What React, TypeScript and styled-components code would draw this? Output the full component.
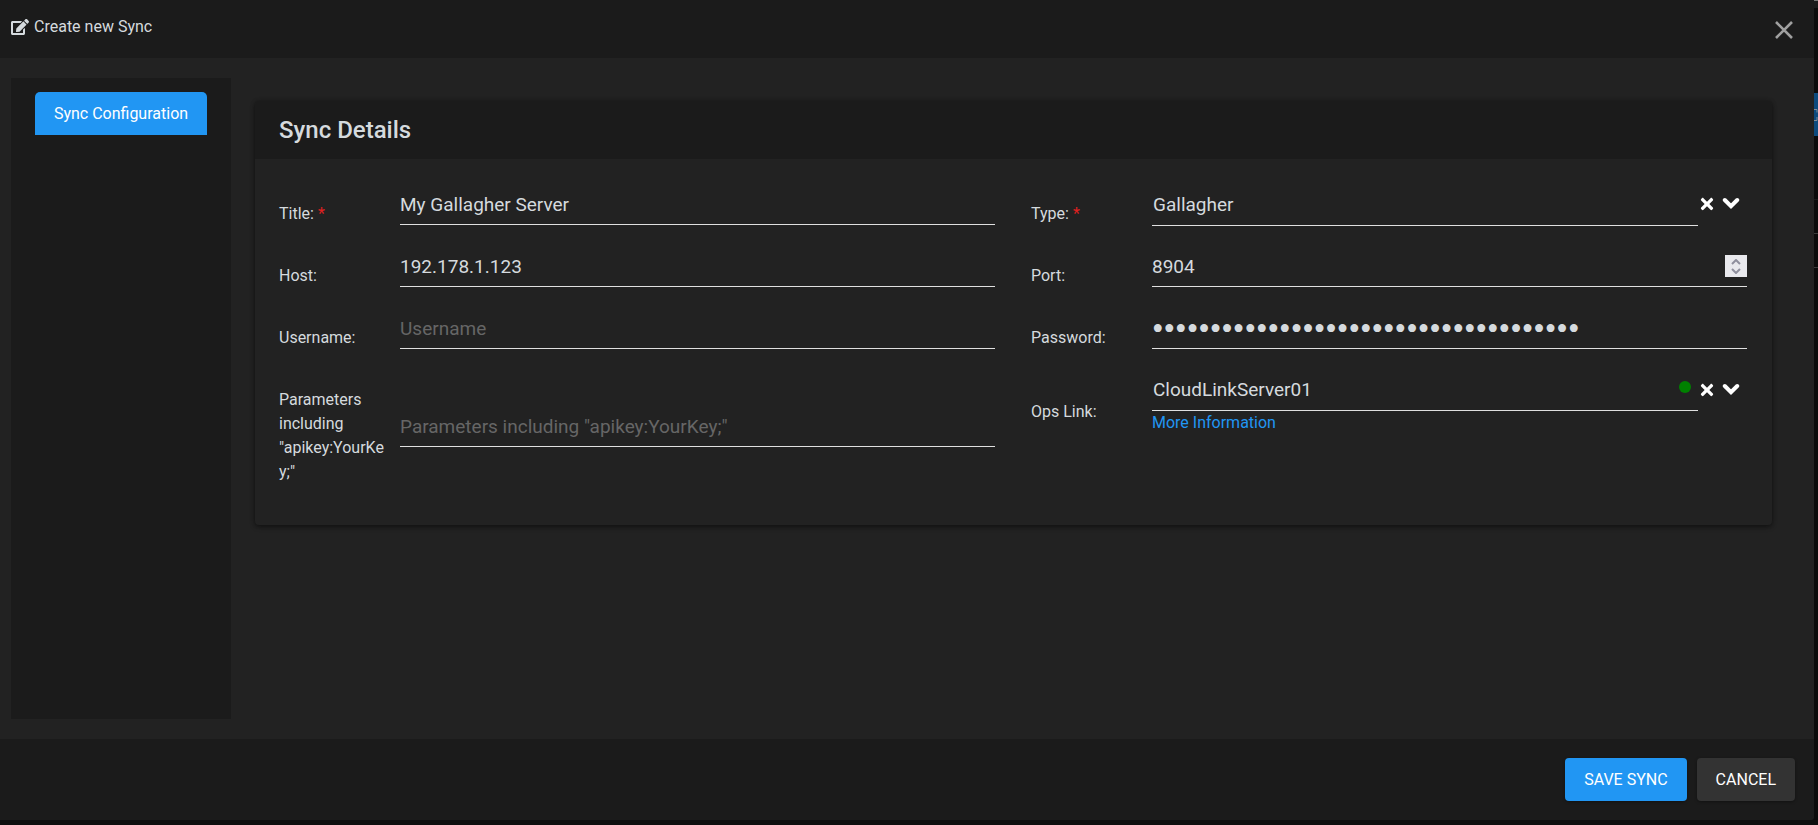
import React, { useState } from "react";
import styled, { createGlobalStyle } from "styled-components";
import { FaEdit, FaTimes } from "react-icons/fa";

const color = {
  panel: "#1b1b1b",
  surface: "#222222",
  text: "#d5dade",
  line: "#e0e0e0",
  accent: "#2196f3",
};

const GlobalStyle = createGlobalStyle`
  *, *::before, *::after { box-sizing: border-box; }
  body {
    margin: 0;
    background: #0e0e0e;
    color: ${color.text};
    font: 400 16px/24px Roboto, sans-serif;
  }
  button, input, select { font: inherit; color: inherit; }
`;

const Page = styled.div`
  display: grid;
  grid-template-columns: minmax(0, 1fr) 4px;
  min-height: 100vh;
  padding-bottom: 5px;
`;

const Dialog = styled.section`
  display: flex;
  flex-direction: column;
  background: ${color.surface};
  border-radius: 0 0 4px 0;
  overflow: hidden;
`;

const Header = styled.header`
  display: flex;
  align-items: flex-start;
  justify-content: space-between;
  height: 58px;
  padding: 15px 20px 0 11px;
  background: ${color.panel};
`;

const Heading = styled.h1`
  display: flex;
  align-items: center;
  gap: 5px;
  margin: 0;
  font-size: 16px;
  font-weight: 400;
  line-height: 24px;
`;

const IconButton = styled.button`
  display: flex;
  align-items: center;
  justify-content: center;
  padding: 0;
  border: 0;
  background: none;
  color: #ffffff;
  cursor: pointer;
`;

const CloseButton = styled(IconButton)`
  padding-top: 5px;
  color: #a0a0a0;
`;

const Body = styled.div`
  display: grid;
  grid-template-columns: 220px minmax(0, 1fr);
  gap: 24px;
  flex: 1;
  padding: 20px 42px 20px 11px;
`;

const Sidebar = styled.nav`
  padding: 14px 24px;
  background: ${color.panel};
`;

const Tab = styled.button`
  width: 100%;
  height: 43px;
  padding: 0;
  border: 0;
  border-radius: 5px 5px 0 0;
  background: ${color.accent};
  color: #ffffff;
`;

const Card = styled.section`
  align-self: start;
  margin-top: 23px;
  border-radius: 4px;
  box-shadow: 0 2px 5px rgba(0, 0, 0, 0.4), 0 0 4px rgba(0, 0, 0, 0.25);
`;

const CardTitle = styled.h2`
  margin: 0;
  padding: 14px 24px;
  border-radius: 4px 4px 0 0;
  background: ${color.panel};
  font-size: 24px;
  font-weight: 500;
  line-height: 30px;
`;

const Form = styled.form`
  display: grid;
  grid-template-columns: repeat(2, minmax(0, 1fr));
  column-gap: 36px;
  padding: 23px 25px 41px 24px;
`;

const Column = styled.div`
  display: flex;
  flex-direction: column;
  gap: 18px;
`;

const Row = styled.div`
  display: grid;
  grid-template-columns: 107px minmax(0, 1fr);
  column-gap: 14px;
  align-items: center;
`;

const Label = styled.label`
  padding-top: 20px;
  overflow-wrap: anywhere;
`;

const Required = styled.span`
  color: #e02020;
`;

const Control = styled.div`
  position: relative;
  display: flex;
  align-items: center;
`;

const Input = styled.input`
  width: 100%;
  height: 42px;
  padding: 2px 0 0;
  border: 0;
  border-bottom: 1px solid ${color.line};
  border-radius: 0;
  outline: 0;
  background: transparent;
  font-size: 19px;
  appearance: textfield;

  &::placeholder { color: #666666; opacity: 1; }
  &::-webkit-inner-spin-button { appearance: none; margin: 0; }
  &[type="password"] {
    padding-top: 4px;
    font-family: "Liberation Serif", serif;
    font-size: 33px;
  }
`;

const Select = styled.select`
  flex: 1;
  min-width: 0;
  height: 43px;
  padding: 2px 1px 0;
  border: 0;
  border-bottom: 1px solid ${color.line};
  border-radius: 0;
  outline: 0;
  background: transparent;
  font-size: 19px;
  appearance: none;
`;

const SelectActions = styled.div`
  display: flex;
  align-items: center;
  gap: 6px;
  width: 49px;
`;

const StatusDot = styled.span`
  position: absolute;
  top: 13px;
  right: 56px;
  width: 12px;
  height: 12px;
  border-radius: 50%;
  background: #008000;
`;

const Spinner = styled.div`
  position: absolute;
  top: 10px;
  right: 0;
  display: grid;
  width: 22px;
  height: 22px;
  padding: 2px 0;
  background: #e9e9ed;
`;

const SpinButton = styled(IconButton)`
  color: #8f8f9d;
`;

const InfoLink = styled.a`
  display: block;
  color: ${color.accent};
  text-decoration: none;
`;

const Footer = styled.footer`
  display: flex;
  justify-content: flex-end;
  gap: 10px;
  padding: 19px;
  background: ${color.panel};
`;

const Action = styled.button<{ $primary?: boolean }>`
  height: 43px;
  padding: 0 19px;
  border: 0;
  border-radius: 4px;
  background: ${(p) => (p.$primary ? color.accent : "#333333")};
  color: #ffffff;
  box-shadow: 0 1px 3px rgba(0, 0, 0, 0.35);
`;

const Backdrop = styled.div`
  display: flex;
  flex-direction: column;
  overflow: hidden;
  background: #0b0b0b;
`;

const BackdropBar = styled.div`
  height: 8px;
  border-top: 1px solid #777777;
  background: ${color.panel};
`;

const BackdropTab = styled.div`
  display: flex;
  align-items: center;
  height: 43px;
  margin-top: 85px;
  background: #0d4a7d;
`;

const BackdropRow = styled.div<{ $tall?: boolean }>`
  height: ${(p) => (p.$tall ? "64px" : "34px")};
  border-bottom: 1px solid ${(p) => (p.$tall ? "#1a1a1a" : "#3a3a3a")};
`;

function SelectField({ id, value, name, online }: { id: string; value: string; name: string; online?: boolean }) {
  return (
    <Control>
      <Select id={id} defaultValue={value}>
        <option>{value}</option>
      </Select>
      {online && <StatusDot />}
      <SelectActions>
        <IconButton type="button" aria-label={`Clear ${name}`}>
          <FaTimes size={18} />
        </IconButton>
        <IconButton type="button" aria-label={`Open ${name}`}>
          <svg width="18" height="14" fill="none" stroke="currentColor" strokeWidth="4" strokeLinecap="round">
            <path d="M2.800 3l6.200 6.200L15.200 3" />
          </svg>
        </IconButton>
      </SelectActions>
    </Control>
  );
}

function PortField() {
  const [port, setPort] = useState(8904);
  return (
    <Control>
      <Input id="port" type="number" value={port} onChange={(e) => setPort(Number(e.target.value))} />
      <Spinner>
        <SpinButton type="button" aria-label="Increase port" onClick={() => setPort(port + 1)}>
          <svg width="10" height="6" fill="none" stroke="currentColor" strokeWidth="2">
            <path d="M1 5l4-4 4 4" />
          </svg>
        </SpinButton>
        <SpinButton type="button" aria-label="Decrease port" onClick={() => setPort(port - 1)}>
          <svg width="10" height="6" fill="none" stroke="currentColor" strokeWidth="2">
            <path d="M1 1l4 4 4-4" />
          </svg>
        </SpinButton>
      </Spinner>
    </Control>
  );
}

export default function App() {
  return (
    <Page>
      <GlobalStyle />
      <Dialog>
        <Header>
          <Heading>
            <FaEdit size={18} />
            Create new Sync
          </Heading>
          <CloseButton type="button" aria-label="Close">
            <svg width="20" height="20" fill="none" stroke="currentColor" strokeWidth="2.6">
              <path d="M2 2l16 16M18 2L2 18" />
            </svg>
          </CloseButton>
        </Header>
        <Body>
          <Sidebar>
            <Tab type="button">Sync Configuration</Tab>
          </Sidebar>
          <Card>
            <CardTitle>Sync Details</CardTitle>
            <Form>
              <Column>
                <Row>
                  <Label htmlFor="title">
                    Title: <Required>*</Required>
                  </Label>
                  <Input id="title" defaultValue="My Gallagher Server" />
                </Row>
                <Row>
                  <Label htmlFor="host">Host:</Label>
                  <Input id="host" defaultValue="192.178.1.123" />
                </Row>
                <Row>
                  <Label htmlFor="username">Username:</Label>
                  <Input id="username" placeholder="Username" />
                </Row>
                <Row>
                  <Label htmlFor="parameters">Parameters including "apikey:YourKey;"</Label>
                  <Input id="parameters" placeholder={'Parameters including "apikey:YourKey;"'} />
                </Row>
              </Column>
              <Column>
                <Row>
                  <Label htmlFor="type">
                    Type: <Required>*</Required>
                  </Label>
                  <SelectField id="type" name="type" value="Gallagher" />
                </Row>
                <Row>
                  <Label htmlFor="port">Port:</Label>
                  <PortField />
                </Row>
                <Row>
                  <Label htmlFor="password">Password:</Label>
                  <Input id="password" type="password" defaultValue={"x".repeat(37)} />
                </Row>
                <Row>
                  <Label htmlFor="ops-link">Ops Link:</Label>
                  <div>
                    <SelectField id="ops-link" name="ops link" value="CloudLinkServer01" online />
                    <InfoLink href="#more-information">More Information</InfoLink>
                  </div>
                </Row>
              </Column>
            </Form>
          </Card>
        </Body>
        <Footer>
          <Action type="button" $primary>
            SAVE SYNC
          </Action>
          <Action type="button">CANCEL</Action>
        </Footer>
      </Dialog>
      <Backdrop aria-hidden="true">
        <BackdropBar />
        <BackdropTab>
          <svg width="4" height="12" fill="none" stroke="#7f8c99">
            <path d="M0 .5h3v3M3 8v3.500H0" />
          </svg>
        </BackdropTab>
        <BackdropRow $tall />
        <BackdropRow />
        <BackdropRow />
      </Backdrop>
    </Page>
  );
}
